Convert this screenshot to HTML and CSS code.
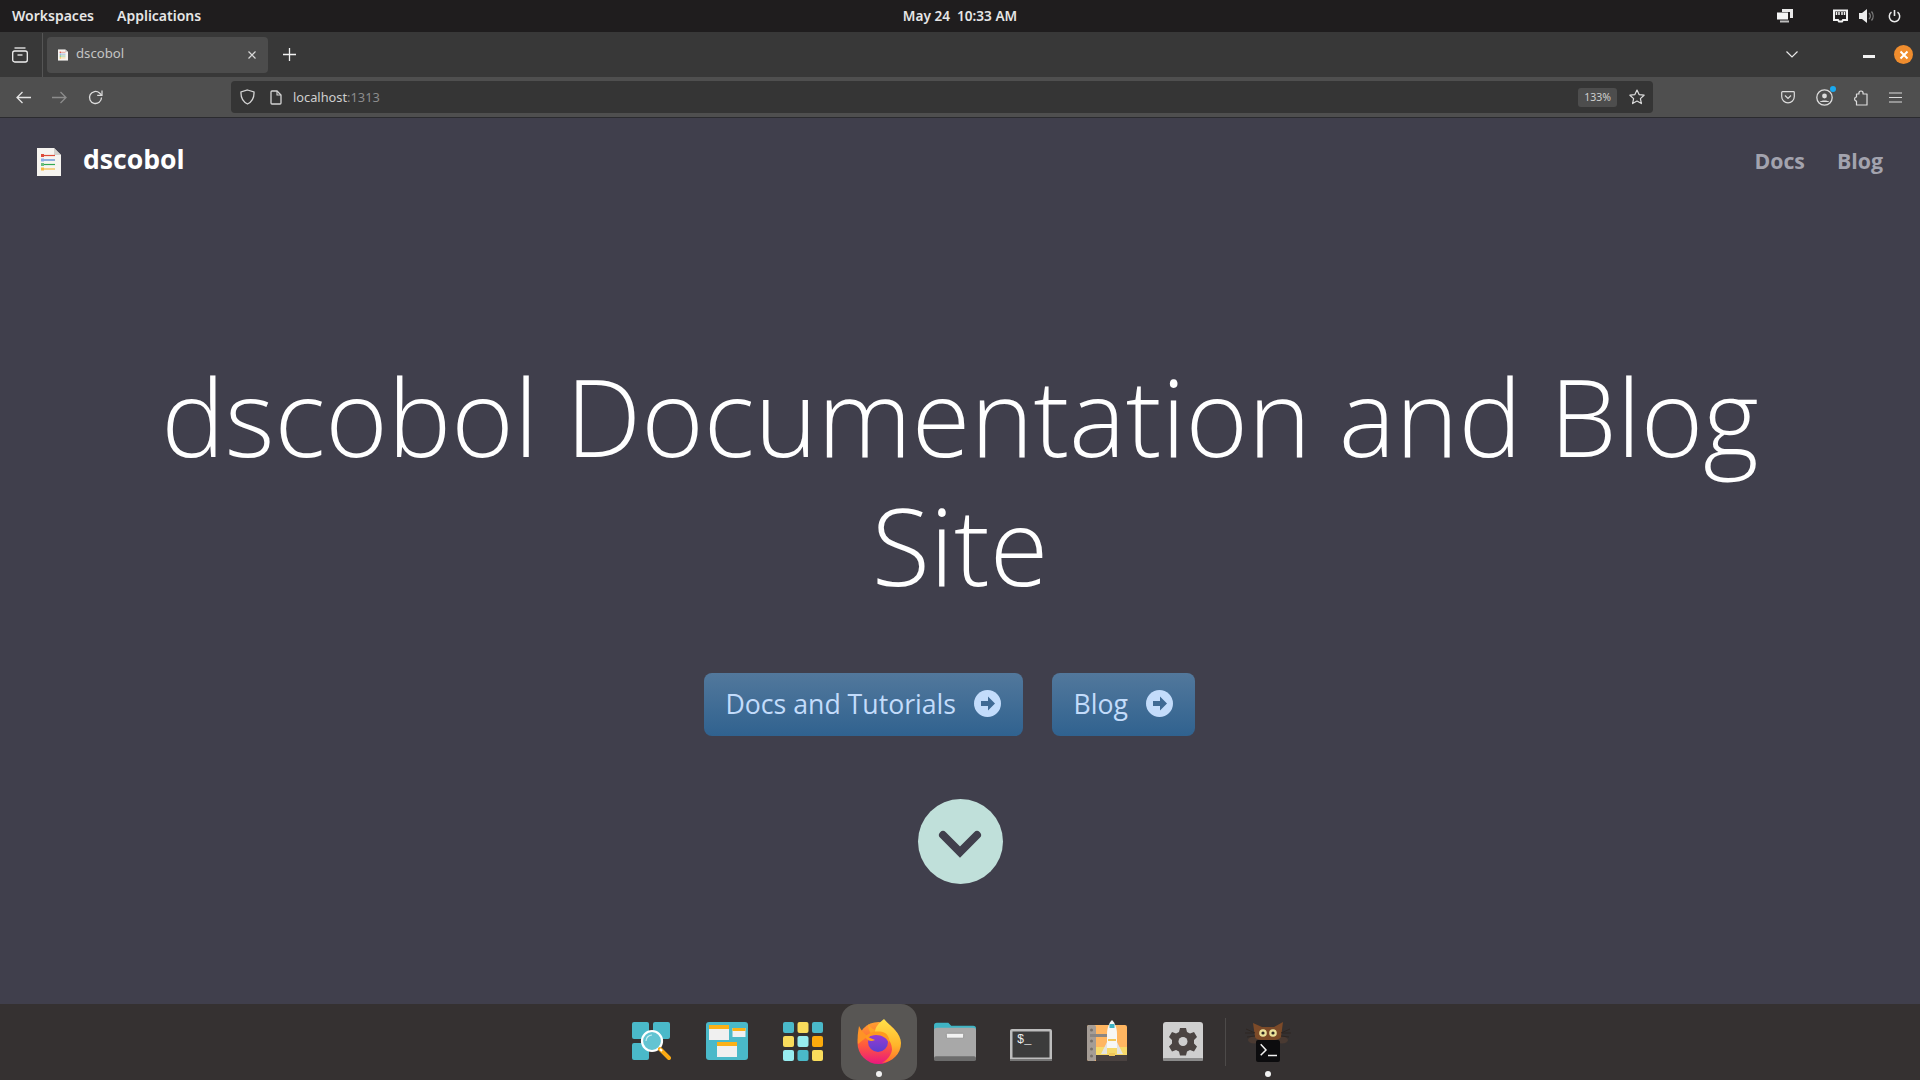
FILE: index.html
```html
<!DOCTYPE html>
<html lang="en">
<head>
  <meta charset="UTF-8">
  <title>dscobol</title>
  <link rel="stylesheet" href="styles.css">
</head>
<body>

  <!-- Desktop top panel -->
  <header class="panel">
    <div class="panel-left">
      <span>Workspaces</span>
      <span>Applications</span>
    </div>
    <div class="panel-clock">May 24&nbsp;&nbsp;10:33 AM</div>
    <div class="panel-right">
      <svg class="tray-windows" width="18" height="16" viewBox="0 0 18 16"><path d="M6 1h11v9h-3V4H6z" fill="#e8e8e8"/><path d="M1 4.500h11v7H1z" fill="#f4f4f4"/><path d="M4 12.500h9v2H4z" fill="#bdbdbd"/></svg>
      <svg class="tray-net" width="15" height="14" viewBox="0 0 15 14"><path d="M1 1.500h13v9.500h-4l-1 1.500H6L5 11H1z" fill="none" stroke="#f2f2f2" stroke-width="2"/><path d="M3.500 3v3M6 3v3M9 3v3M11.500 3v3" stroke="#f2f2f2" stroke-width="1.500"/></svg>
      <svg class="tray-sound" width="16" height="14" viewBox="0 0 16 14"><path d="M0 4h3l5-4v14l-5-4H0z" fill="#ececec"/><path d="M10 4a4 4 0 0 1 0 6M12.500 2.500a7 7 0 0 1 0 9" fill="none" stroke="#7d7d7d" stroke-width="1.300"/></svg>
      <svg class="tray-power" width="13" height="14" viewBox="0 0 13 14"><path d="M6.500 1v6" stroke="#ececec" stroke-width="1.600" fill="none"/><path d="M3.500 3.200a5.200 5.200 0 1 0 6 0" stroke="#ececec" stroke-width="1.500" fill="none"/></svg>
    </div>
  </header>

  <!-- Firefox tab strip -->
  <div class="tabstrip">
    <div class="tabstrip-views">
      <svg width="16" height="16" viewBox="0 0 16 16" fill="none" stroke="#f0f0f0" stroke-width="1.300"><path d="M2.500 1h11"/><rect x="0.700" y="4" width="14.600" height="11" rx="2"/><path d="M5.500 8h5"/></svg>
    </div>
    <div class="tab">
      <svg class="doc-logo" width="10" height="12" viewBox="0 0 24 28"><use href="#doc"/></svg>
      <span class="tab-title">dscobol</span>
      <svg class="tab-close" width="8" height="8" viewBox="0 0 8 8"><path d="M.5.500l7 7M7.500.500l-7 7" stroke="#d8d8d8" stroke-width="1.200"/></svg>
    </div>
    <svg class="tab-new" width="13" height="13" viewBox="0 0 13 13"><path d="M6.500 0v13M0 6.500h13" stroke="#f2f2f2" stroke-width="1.300"/></svg>
    <div class="tabstrip-end">
      <svg class="tab-list" width="12" height="7" viewBox="0 0 12 7"><path d="M.5.500L6 6 11.500.500" fill="none" stroke="#e8e8e8" stroke-width="1.200"/></svg>
      <div class="win-min"></div>
      <div class="win-close">
        <svg width="10" height="10" viewBox="0 0 10 10"><path d="M1.500 1.500l7 7M8.500 1.500l-7 7" stroke="#fff" stroke-width="2"/></svg>
      </div>
    </div>
  </div>

  <!-- Firefox toolbar -->
  <div class="toolbar">
    <div class="nav-buttons">
      <svg width="15" height="13" viewBox="0 0 15 13" fill="none" stroke="#e4e4e4" stroke-width="1.300"><path d="M15 6.500H1M6.500 1L1 6.500 6.500 12"/></svg>
      <svg width="15" height="13" viewBox="0 0 15 13" fill="none" stroke="#8c8c8c" stroke-width="1.300"><path d="M0 6.500h14M8.500 1L14 6.500 8.500 12"/></svg>
      <svg width="15" height="15" viewBox="0 0 15 15" fill="none" stroke="#dcdcdc" stroke-width="1.300"><path d="M13.500 7.500a6 6 0 1 1-2-4.500l2 2"/><path d="M14 .500v4.800H9.200" stroke-width="1.200"/></svg>
    </div>
    <div class="urlbar">
      <svg class="url-shield" width="15" height="16" viewBox="0 0 15 16"><path d="M7.500 1L14 3c.3 5.500-1.800 9.800-6.500 12C2.800 12.800.7 8.500 1 3z" fill="none" stroke="#d4d4d4" stroke-width="1.300"/></svg>
      <svg class="url-page" width="12" height="15" viewBox="0 0 12 15"><path d="M1 2a1 1 0 0 1 1-1h5l4 4v8a1 1 0 0 1-1 1H2a1 1 0 0 1-1-1z" fill="none" stroke="#d4d4d4" stroke-width="1.300"/><path d="M7 1v4h4" fill="none" stroke="#d4d4d4" stroke-width="1.100"/></svg>
      <span class="url-text">localhost<span class="url-port">:1313</span></span>
      <span class="url-zoom">133%</span>
      <svg class="url-star" width="16" height="16" viewBox="0 0 16 16"><path d="M8 1l2.100 4.600 5 .6-3.700 3.400 1 5L8 12.100 3.600 14.600l1-5L.9 6.200l5-.6z" fill="none" stroke="#dcdcdc" stroke-width="1.200" stroke-linejoin="round"/></svg>
    </div>
    <div class="tool-buttons">
      <svg width="14" height="13" viewBox="0 0 14 13" fill="none" stroke="#dcdcdc" stroke-width="1.200"><path d="M1.500.700h11a.8.800 0 0 1 .8.800v4a6.300 6.300 0 0 1-12.600 0v-4a.8.800 0 0 1 .8-.8z"/><path d="M4 4.500l3 3 3-3"/></svg>
      <div class="account">
        <svg width="17" height="17" viewBox="0 0 17 17" fill="none" stroke="#dcdcdc" stroke-width="1.300"><circle cx="8.500" cy="8.500" r="7.700"/><circle cx="8.500" cy="7" r="2.400" fill="#dcdcdc" stroke="none"/><path d="M3.800 13c1-2 8.400-2 9.400 0" fill="#dcdcdc" stroke="none"/></svg>
        <span class="account-dot"></span>
      </div>
      <svg width="14" height="17" viewBox="0 0 14 17" fill="none" stroke="#dcdcdc" stroke-width="1.200"><path d="M2.500 16v-4c-2.500 0-2.500-4 0-4V5H5C4 1 10 1 9 5h4v11z" stroke-linejoin="round"/></svg>
      <svg width="13" height="11" viewBox="0 0 13 11" stroke="#dcdcdc" stroke-width="1.200"><path d="M0 1h13M0 5.500h13M0 10h13"/></svg>
    </div>
  </div>

  <!-- Site page -->
  <main class="page">
    <nav class="site-nav">
      <a class="brand">
        <svg class="brand-logo" width="24" height="28" viewBox="0 0 24 28"><use href="#doc"/></svg>
        <span>dscobol</span>
      </a>
      <div class="site-links">
        <a>Docs</a>
        <a>Blog</a>
      </div>
    </nav>

    <section class="hero">
      <h1>dscobol Documentation and Blog Site</h1>
      <div class="hero-buttons">
        <a class="btn">Docs and Tutorials <svg width="27" height="27" viewBox="0 0 27 27"><use href="#arrow"/></svg></a>
        <a class="btn">Blog <svg width="27" height="27" viewBox="0 0 27 27"><use href="#arrow"/></svg></a>
      </div>
      <a class="scroll-down">
        <svg width="44" height="28" viewBox="0 0 44 28"><path d="M5 5l17 17L39 5" fill="none" stroke="#403f4c" stroke-width="8" stroke-linecap="round" stroke-linejoin="miter"/></svg>
      </a>
    </section>
  </main>

  <!-- Dock -->
  <footer class="dock">
    <div class="dock-item">
      <svg width="40" height="40" viewBox="0 0 40 40">
        <rect x="1" y="1" width="17" height="17" rx="2" fill="#4ab9c9"/><rect x="22" y="1" width="17" height="17" rx="2" fill="#4ab9c9"/><rect x="1" y="22" width="17" height="17" rx="2" fill="#4ab9c9"/>
        <circle cx="21" cy="20" r="10" fill="#63c4d2" stroke="#fff" stroke-width="2.200"/>
        <path d="M15 20a6 6 0 0 1 6-6" fill="none" stroke="#c9eef2" stroke-width="1.200"/>
        <path d="M29 28l9 9" stroke="#fbaa14" stroke-width="4" stroke-linecap="round"/><path d="M29 28l2 2" stroke="#fff" stroke-width="2"/>
      </svg>
    </div>
    <div class="dock-item">
      <svg width="42" height="40" viewBox="0 0 42 40">
        <rect x="0" y="1" width="42" height="38" rx="3" fill="#4ab9c9"/>
        <rect x="3" y="4" width="20" height="15" fill="#f0f0f0"/><rect x="3" y="4" width="20" height="4" fill="#fbb117"/>
        <rect x="26.500" y="7" width="13" height="9" fill="#f0f0f0"/><rect x="26.500" y="7" width="13" height="3" fill="#fbb117"/>
        <rect x="11" y="21" width="20" height="15" fill="#f0f0f0"/><rect x="11" y="21" width="20" height="4" fill="#fbb117"/>
      </svg>
    </div>
    <div class="dock-item">
      <svg width="40" height="40" viewBox="0 0 40 40">
        <rect x="0" y="1" width="11" height="11" rx="2" fill="#4ab9c9"/><rect x="14.500" y="1" width="11" height="11" rx="2" fill="#f9dc5c"/><rect x="29" y="1" width="11" height="11" rx="2" fill="#4ab9c9"/>
        <rect x="0" y="15" width="11" height="11" rx="2" fill="#f9dc5c"/><rect x="14.500" y="15" width="11" height="11" rx="2" fill="#97ecef"/><rect x="29" y="15" width="11" height="11" rx="2" fill="#fbaa0c"/>
        <rect x="0" y="29" width="11" height="11" rx="2" fill="#97ecef"/><rect x="14.500" y="29" width="11" height="11" rx="2" fill="#4ab9c9"/><rect x="29" y="29" width="11" height="11" rx="2" fill="#f9dc5c"/>
      </svg>
    </div>
    <div class="dock-item dock-active dock-running">
      <svg width="45" height="46" viewBox="0 0 45 46">
        <defs>
          <linearGradient id="ffBody" x1="0" y1="0" x2="0" y2="1"><stop offset="0" stop-color="#ffa030"/><stop offset=".55" stop-color="#ff5a3c"/><stop offset="1" stop-color="#e9177f"/></linearGradient>
          <linearGradient id="ffFlame" x1="0" y1="0" x2="0" y2="1"><stop offset="0" stop-color="#ffe24a"/><stop offset=".6" stop-color="#ffb52a"/><stop offset="1" stop-color="#ff6a2c"/></linearGradient>
          <linearGradient id="ffGlobe" x1="0" y1="0" x2="0" y2="1"><stop offset="0" stop-color="#a13bd0"/><stop offset="1" stop-color="#5b3fd0"/></linearGradient>
        </defs>
        <circle cx="22.500" cy="25" r="21" fill="url(#ffBody)"/>
        <path d="M3 8C2 14 1 20 2 26l10-8C8 16 5 12 3 8z" fill="#ff9326"/>
        <path d="M12 6c0 4 1 8 4 10l6-3c-4-1-7-3-10-7z" fill="#ffa526"/>
        <path d="M28 1c-5 4-9 8-9 13 6 2 17 5 17 18-1 6-6 11-10 13 10-1 19-9 19-20C45 15 35 9 28 1z" fill="url(#ffFlame)"/>
        <circle cx="22" cy="24" r="10" fill="url(#ffGlobe)"/>
        <path d="M9 19c4-5 13-7 20-4 3 2 5 6 4 10-2-5-7-8-13-8-3 0-6 1-8 2 2 1 5 2 7 3-4 2-7 1-10-3z" fill="#ff9a1f"/>
      </svg>
    </div>
    <div class="dock-item">
      <svg width="42" height="42" viewBox="0 0 44 42">
        <path d="M0 5a3 3 0 0 1 3-3h12l3 3h23a3 3 0 0 1 3 3v8H0z" fill="#3fb4c4"/>
        <rect x="0" y="7" width="44" height="34" rx="3" fill="#a8a8a8"/>
        <rect x="0" y="37" width="44" height="5" rx="2" fill="#6c6c6c"/>
        <rect x="13" y="13" width="18" height="5" rx="1" fill="#f2f2f2" stroke="#777" stroke-width=".6"/>
      </svg>
    </div>
    <div class="dock-item">
      <svg class="dock-term" width="42" height="32" viewBox="0 0 42 32">
        <rect x="0" y="0" width="42" height="32" rx="2" fill="#bdbdbd"/>
        <rect x="2.500" y="2.500" width="37" height="26" fill="#3c3c3c"/>
        <rect x="0" y="30" width="42" height="2" fill="#777"/>
        <text x="7" y="14" class="dock-prompt">$_</text>
      </svg>
    </div>
    <div class="dock-item">
      <svg width="40" height="42" viewBox="0 0 40 42">
        <rect x="0" y="5" width="40" height="36" rx="2" fill="#ffb661"/>
        <rect x="9" y="27" width="31" height="8" fill="#f7d96a"/>
        <rect x="9" y="35" width="31" height="6" fill="#4a4240"/>
        <rect x="0" y="5" width="9" height="36" rx="2" fill="#a59d96"/>
        <rect x="3" y="14" width="22" height="3" fill="#8a8683"/>
        <circle cx="4.500" cy="10" r="1.500" fill="#77706a"/><circle cx="4.500" cy="21" r="1.500" fill="#77706a"/><circle cx="4.500" cy="29" r="1.500" fill="#77706a"/><circle cx="4.500" cy="36" r="1.500" fill="#77706a"/>
        <path d="M25 0c3 3 5 8 5 14v14h-10V14c0-6 2-11 5-14z" fill="#f7f7f5"/>
        <path d="M20 22l-6 12h6zM30 22l6 12h-6z" fill="#e3e3e0"/>
        <rect x="22.500" y="4" width="5" height="4" fill="#3fb4c4"/>
        <rect x="21" y="19" width="8" height="2" fill="#f1c75a"/><rect x="22" y="33" width="6" height="3" fill="#f1c75a"/>
      </svg>
    </div>
    <div class="dock-item">
      <svg width="40" height="39" viewBox="0 0 40 39">
        <rect x="0" y="0" width="40" height="39" rx="3" fill="#cfcfcf"/>
        <rect x="0" y="36" width="40" height="3" rx="1" fill="#8b8b8b"/>
        <path d="M17 6h6l1 4 3 1.500 4-1.500 3 5-3 3v3.500l3 3-3 5-4-1.500-3 1.500-1 4h-6l-1-4-3-1.500-4 1.500-3-5 3-3V18l-3-3 3-5 4 1.500 3-1.500z" fill="#4b4442"/>
        <circle cx="20" cy="19.500" r="4.500" fill="#cfcfcf"/>
      </svg>
    </div>
    <div class="dock-sep"></div>
    <div class="dock-item dock-running">
      <svg width="46" height="44" viewBox="0 0 46 44">
        <ellipse cx="9" cy="21" rx="6" ry="3.500" fill="#4a3a32"/><ellipse cx="37" cy="21" rx="6" ry="3.500" fill="#4a3a32"/>
        <path d="M8 4l9 4h12l9-5-2 15c-2 5-24 5-26 0z" fill="#7c4a28"/>
        <path d="M1 10l9 4M0 14h9M2 18l8-1M45 10l-9 4M46 14h-9M44 18l-8-1" stroke="#2e2622" stroke-width="1"/>
        <circle cx="18" cy="14" r="3.800" fill="#ece29a"/><circle cx="28" cy="14" r="3.800" fill="#ece29a"/>
        <circle cx="18" cy="14" r="1.600" fill="#2e2622"/><circle cx="28" cy="14" r="1.600" fill="#2e2622"/>
        <rect x="11" y="21" width="24" height="22" rx="2" fill="#0c0c0e"/>
        <path d="M15.700 25.300L21 31l-5.300 5.300" fill="none" stroke="#f2f2f2" stroke-width="1.500"/><path d="M23 36.500h9" stroke="#f2f2f2" stroke-width="1.500"/>
      </svg>
    </div>
  </footer>

  <!-- Shared icons -->
  <svg class="sprites" width="0" height="0">
    <symbol id="doc" viewBox="0 0 24 28">
      <path d="M0 0h17l7 7v21H0z" fill="#f6f4f0"/>
      <path d="M17 0l7 7h-7z" fill="#d2d0cc"/>
      <path d="M5 7.500h13" stroke="#dd4b39" stroke-width="1.200"/><path d="M5 12h13" stroke="#4a7fd0" stroke-width="1.200"/><path d="M5 16.500h13" stroke="#33a853" stroke-width="1.200"/><path d="M5 21h13" stroke="#f5b942" stroke-width="1.200"/>
      <rect x="4" y="6" width="3" height="3" fill="#dd4b39"/><rect x="4" y="10.500" width="3" height="3" fill="#8aa9e6"/><rect x="4" y="15" width="3" height="3" fill="#6cbf80"/><rect x="4" y="19.500" width="3" height="3" fill="#f5b942"/>
    </symbol>
    <symbol id="arrow" viewBox="0 0 27 27">
      <circle cx="13.500" cy="13.500" r="13.500" fill="#c3dcfb"/>
      <path d="M7 11h7V6.500l7 7-7 7V16H7z" fill="#3f6a94"/>
    </symbol>
  </svg>

</body>
</html>
```

FILE: styles.css
```css
* {
  box-sizing: border-box;
}

html, body {
  height: 100%;
}

body {
  margin: 0;
  display: flex;
  flex-direction: column;
  overflow: hidden;
  font-family: "Open Sans", sans-serif;
  background-color: #403f4c;
}

svg {
  display: block;
  flex: none;
}

.sprites {
  position: absolute;
}

/* Top panel */
.panel {
  height: 32px;
  flex: none;
  display: grid;
  grid-template-columns: 1fr auto 1fr;
  align-items: center;
  padding: 0 12px;
  background-color: #1f1d1e;
  color: #e6e6e6;
  font-family: "Noto Sans", sans-serif;
  font-size: 13.6px;
  font-weight: 600;
}

.panel-left {
  display: flex;
  gap: 23px;
  font-size: 14px;
  margin-top: -1px;
}

.panel-clock {
  margin-top: -1px;
}

.panel-right {
  display: flex;
  align-items: center;
  justify-content: flex-end;
  padding-right: 7px;
}

.tray-net {
  margin-left: 39px;
}

.tray-sound {
  margin-left: 11px;
}

.tray-power {
  margin-left: 13px;
}

/* Tab strip */
.tabstrip {
  height: 45px;
  flex: none;
  display: flex;
  align-items: center;
  background-color: #383838;
}

.tabstrip-views {
  width: 43px;
  height: 44px;
  display: flex;
  align-items: center;
  padding-left: 12px;
  border-right: 1px solid #555;
}

.tab {
  width: 221px;
  height: 36px;
  margin-left: 4px;
  display: flex;
  align-items: center;
  padding: 0 12px 0 11px;
  border-radius: 4px;
  background-color: #4c4c4c;
}

.tab-title {
  flex: 1;
  margin-left: 8px;
  margin-top: -3px;
  font-family: "Noto Sans", sans-serif;
  font-size: 13.2px;
  color: #c4c4c4;
}

.tab-new {
  margin-left: 15px;
}

.tabstrip-end {
  margin-left: auto;
  display: flex;
  align-items: center;
}

.tab-list {
  margin-right: 65px;
}

.win-min {
  width: 12px;
  height: 3px;
  margin-top: 4px;
  margin-right: 19px;
  background-color: #f2f2f2;
}

.win-close {
  width: 19px;
  height: 19px;
  margin-right: 7px;
  display: flex;
  align-items: center;
  justify-content: center;
  border-radius: 50%;
  background-color: #f08d2e;
}

/* Toolbar */
.toolbar {
  height: 41px;
  flex: none;
  display: flex;
  align-items: center;
  border-bottom: 1px solid #2b2b2f;
  background-color: #4f4f4f;
}

.nav-buttons {
  width: 231px;
  display: flex;
  align-items: center;
  gap: 21px;
  padding-left: 16px;
}

.urlbar {
  width: 1422px;
  height: 32px;
  display: flex;
  align-items: center;
  padding: 0 6px 0 9px;
  border-radius: 4px;
  background-color: #353535;
}

.url-page {
  margin-left: 15px;
}

.url-text {
  flex: 1;
  margin-left: 11px;
  font-family: "Noto Sans", sans-serif;
  font-size: 12.8px;
  color: #cfcfcf;
}

.url-port {
  color: #8c8c8c;
}

.url-zoom {
  width: 39px;
  height: 19px;
  margin-right: 12px;
  border-radius: 3px;
  background-color: #4d4d4d;
  color: #cfcfcf;
  font-family: "Noto Sans", sans-serif;
  font-size: 10.5px;
  line-height: 19px;
  text-align: center;
}

.url-star {
  margin-right: 2px;
}

.tool-buttons {
  flex: 1;
  display: flex;
  align-items: center;
  justify-content: flex-end;
  gap: 21px;
  padding-right: 18px;
}

.account {
  position: relative;
}

.account-dot {
  position: absolute;
  top: -3px;
  right: -3px;
  width: 6px;
  height: 6px;
  border-radius: 50%;
  background-color: #1aa9f0;
}

/* Site page */
.page {
  flex: 1;
  min-height: 0;
  background-color: #403f4c;
}

.site-nav {
  height: 84px;
  display: flex;
  align-items: center;
  justify-content: space-between;
  padding: 0 37px;
}

.brand {
  display: flex;
  align-items: center;
  color: #fff;
  font-size: 26.6px;
  font-weight: 700;
}

.brand-logo {
  margin-top: 4px;
}

.brand span {
  margin-left: 22px;
  margin-top: -3px;
}

.site-links {
  display: flex;
  gap: 32px;
  color: #a3a3ae;
  font-size: 21.3px;
  font-weight: 700;
}

.hero {
  display: flex;
  flex-direction: column;
  align-items: center;
  padding: 150px 130px 0;
}

.hero h1 {
  margin: 0;
  color: #fff;
  font-size: 106.75px;
  font-weight: 300;
  line-height: 128.5px;
  text-align: center;
}

.hero-buttons {
  display: flex;
  gap: 29px;
  margin-top: 64px;
  padding-right: 21px;
}

.btn {
  height: 63px;
  display: flex;
  align-items: center;
  gap: 18px;
  padding: 0 22px 2px 21.5px;
  border-radius: 8px;
  background: linear-gradient(#52789c, #30628f);
  color: #c3dcfb;
  font-size: 26.67px;
}

.scroll-down {
  width: 85px;
  height: 85px;
  margin-top: 63px;
  display: flex;
  align-items: center;
  justify-content: center;
  border-radius: 50%;
  background-color: #c0e0da;
  padding-top: 4px;
}

/* Dock */
.dock {
  height: 76px;
  flex: none;
  display: flex;
  justify-content: center;
  padding-right: 2px;
  background-color: #353131;
}

.dock-item {
  position: relative;
  width: 76px;
  display: flex;
  align-items: center;
  justify-content: center;
  padding-bottom: 2px;
}

.dock-term {
  margin-top: 8px;
}

.dock-active {
  border-radius: 16px;
  background-color: #585654;
}

.dock-running::after {
  content: "";
  position: absolute;
  bottom: 3px;
  left: 35px;
  width: 6px;
  height: 6px;
  border-radius: 50%;
  background-color: #f2f2f2;
}

.dock-sep {
  width: 1px;
  height: 48px;
  margin: 14px 4px 0;
  background-color: #4d4a49;
}

.dock-prompt {
  fill: #f2f2f2;
  font-family: "Liberation Mono", monospace;
  font-size: 12px;
}
```
